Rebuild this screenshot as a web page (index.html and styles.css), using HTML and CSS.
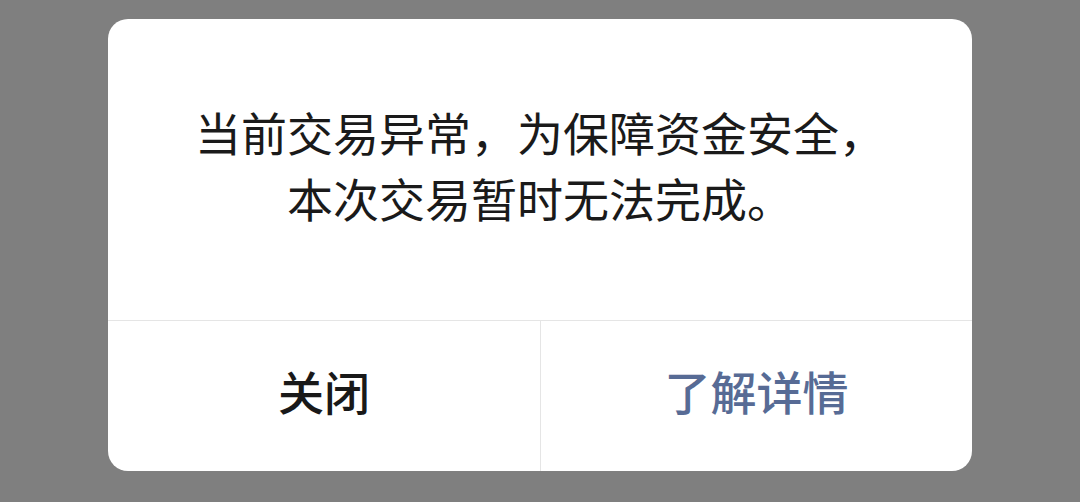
FILE: index.html
```html
<!DOCTYPE html>
<html lang="zh-CN">
<head>
<meta charset="utf-8">
<link rel="stylesheet" href="styles.css">
</head>
<body>
<div class="page">
  <div class="dialog">
    <div class="content">
      <p class="msg">当前交易异常，为保障资金安全，<br>本次交易暂时无法完成。</p>
    </div>
    <div class="actions">
      <div class="btn btn-close">关闭</div>
      <div class="btn btn-more">了解详情</div>
    </div>
  </div>
</div>
</body>
</html>
```

FILE: styles.css
```css
html, body {
  margin: 0;
  padding: 0;
  height: 100%;
  background: #7f7f7f;
  font-family: "Noto Sans CJK SC", "Noto Sans", sans-serif;
}
.page {
  display: flex;
  justify-content: center;
  padding-top: 19px;
}
.dialog {
  width: 864px;
  height: 452px;
  background: #ffffff;
  border-radius: 20px;
  overflow: hidden;
  display: flex;
  flex-direction: column;
}
.content {
  height: 302px;
  flex-shrink: 0;
  box-sizing: border-box;
  padding-bottom: 12px;
  display: flex;
  align-items: center;
  justify-content: center;
  border-bottom: 1px solid #e5e5e5;
}
.msg {
  margin: 0;
  font-size: 46px;
  line-height: 66px;
  color: #1a1a1a;
  text-align: center;
  font-weight: 400;
}
.actions {
  flex: 1;
  display: grid;
  grid-template-columns: 433px 1fr;
}
.btn {
  display: flex;
  align-items: center;
  justify-content: center;
  padding-bottom: 12px;
  font-size: 46px;
  font-weight: 500;
}
.btn-close {
  color: #191919;
  border-right: 1px solid #e5e5e5;
}
.btn-more {
  color: #576b95;
}
```
